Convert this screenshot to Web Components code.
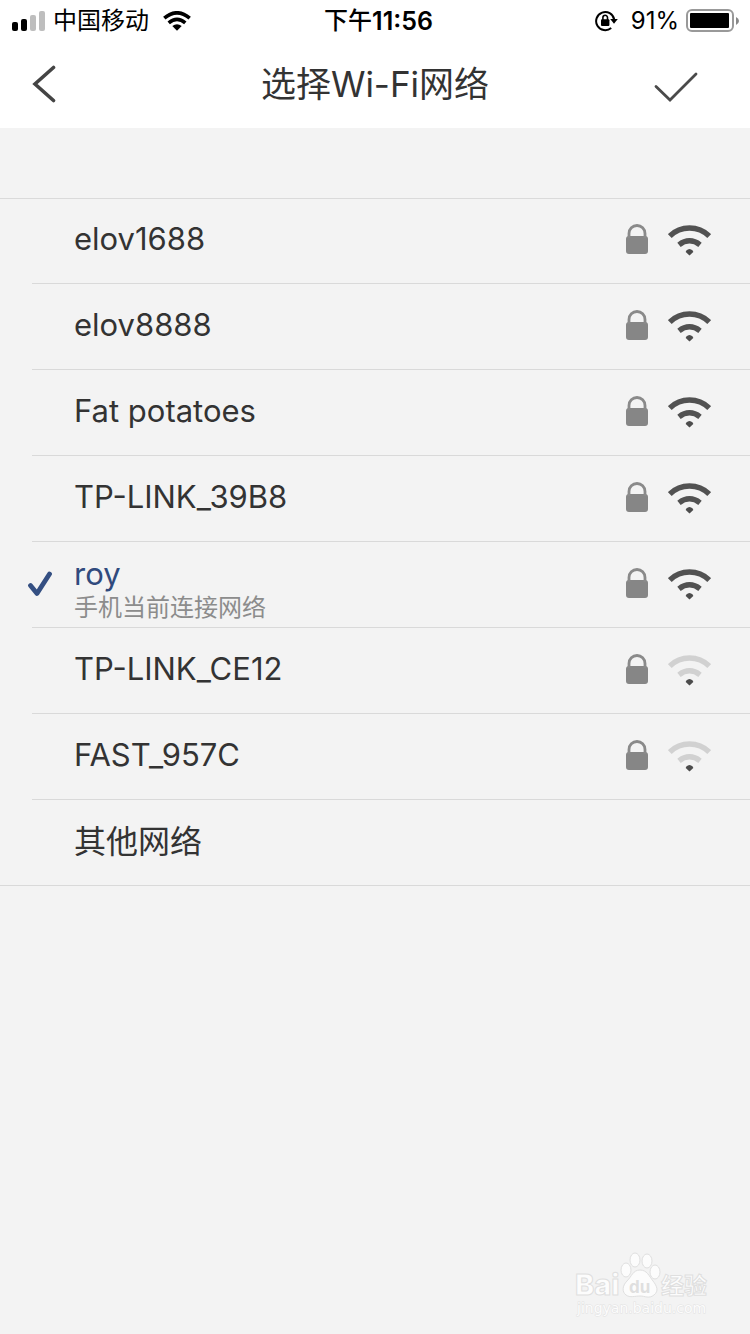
<!DOCTYPE html>
<html lang="zh-CN">
<head>
<meta charset="utf-8">
<meta name="viewport" content="width=device-width, initial-scale=1">
<title>选择Wi-Fi网络</title>
<style>
  body { margin: 0; background: #f3f3f3; color: #333; font-family: Inter, "Noto Sans CJK SC", sans-serif; }
</style>
</head>
<body>
<wifi-app></wifi-app>
<script>
const define = (name, html, setup) => customElements.define(name, class extends HTMLElement {
  connectedCallback() {
    if (this.shadowRoot) return;
    const t = document.createElement('template');
    t.innerHTML = '<style>*{box-sizing:border-box}svg{display:block;flex:none}</style>' + html;
    this.attachShadow({ mode: 'open' }).append(t.content.cloneNode(true));
    if (setup) setup(this, this.shadowRoot);
  }
});

define('status-bar', `
<style>
  :host { display: grid; grid-template-columns: 1fr auto 1fr; align-items: center; padding: 2px 11px 0 12px; color: #000; font-size: 24px; line-height: 38px; }
  div { display: flex; align-items: center; }
  .left { gap: 8px; }
  .carrier { margin-right: 6px; }
  .right { justify-content: flex-end; gap: 7px; }
  .time { font-weight: 600; font-size: 25px; padding-left: 6px; }
  .time span { font-weight: 500; font-size: 24px; }
  .pct { padding-left: 6px; }
</style>
<div class="left">
  <svg width="33" height="20" viewBox="0 0 33 20" aria-label="信号"><rect y="11" width="6" height="9" rx="2"/><rect x="9" y="8" width="6" height="12" rx="2"/><rect x="18" y="4" width="6" height="16" rx="2" fill="#bebebe"/><rect x="27" width="6" height="20" rx="2" fill="#bebebe"/></svg>
  <span class="carrier">中国移动</span>
  <svg width="28" height="20" viewBox="0 0 28 20" fill="none" stroke="#000" stroke-width="3.6"><path d="M1.300 7.200Q14-3.600 26.700 7.200"/><path d="M5.700 11.800Q14 4.800 22.300 11.800"/><path d="M9.300 15Q14 11.400 18.700 15L14 19.800Z" fill="#000" stroke="none"/></svg>
</div>
<div class="time"><span>下午</span>11:56</div>
<div class="right">
  <svg width="23" height="22" viewBox="0 0 23 22"><path d="M16.200 18A9.100 9.100 0 1 1 19.200 9.500" fill="none" stroke="#000" stroke-width="2"/><path d="M15.200 9h7.600L19 13.800Z"/><rect x="6" y="9.300" width="8.400" height="6.800" rx="1"/><path d="M7.900 10V7.600a2.300 2.300 0 0 1 4.600 0V10" fill="none" stroke="#000" stroke-width="1.600"/></svg>
  <span class="pct">91%</span>
  <svg width="53" height="24" viewBox="0 0 53 24"><rect x="1" y="1" width="46" height="21" rx="5" fill="none" stroke="#999" stroke-width="2"/><rect x="4" y="4" width="39" height="15" rx="1"/><path d="M50 8q3 1.500 3 4t-3 4Z" fill="#888"/></svg>
</div>`);

define('nav-bar', `
<style>
  :host { display: grid; grid-template-columns: 1fr auto 1fr; align-items: center; min-height: 88px; padding: 0 32px; }
  h1 { margin: 0; font-size: 35px; line-height: 48px; font-weight: 400; color: #333; }
  button { border: 0; padding: 0; background: none; color: #444; }
  .ok { justify-self: end; padding: 6px 20px 0 0; }
</style>
<button aria-label="返回"><svg width="24" height="38" viewBox="0 0 24 38" fill="none" stroke="currentColor" stroke-width="3.600" stroke-linecap="round"><path d="M21.500 2.500 3 19l18.500 16.500"/></svg></button>
<h1><slot></slot></h1>
<button class="ok" aria-label="确定"><svg width="44" height="30" viewBox="0 0 44 30" fill="none" stroke="#4a4a4a" stroke-width="2.800" stroke-linecap="round"><path d="M2 14.500 16 28 42 2"/></svg></button>`);

define('lock-icon', `
<style>:host { display: block; }</style>
<svg width="22" height="32" viewBox="0 0 22 32"><rect y="12" width="22" height="18" rx="3" fill="#868686"/><path d="M3 14V9.500a8 8 0 0 1 16 0V14" fill="none" stroke="#8a8a8a" stroke-width="2.800"/></svg>`);

define('wifi-icon', `
<style>
  :host { display: block; --arc: #525252; }
  :host([weak]) { --arc: #d1d1d1; }
  .arc { fill: none; stroke: var(--arc); stroke-width: 5.400; }
</style>
<svg width="43" height="32" viewBox="0 0 43 32"><path class="arc" d="M1.800 12Q10 4 21.500 4T41.200 12"/><path class="arc" d="M11 20.800Q16 16.800 21.500 16.800T32 20.800"/><path d="M18.300 26.500q3.200-3 6.400 0l.6 1.500-3.800 3.500-3.800-3.500Z" fill="#4c4c4c"/></svg>`);

define('network-row', `
<style>
  :host { display: block; position: relative; }
  :host(:first-child) { border-top: 1px solid #dadada; }
  :host::after { content: ""; position: absolute; left: 32px; right: 0; bottom: 0; height: 1px; background: #d9d9d9; }
  :host(:last-child)::after { left: 0; }
  button { display: grid; grid-template-columns: 46px 1fr auto; align-items: center; width: 100%; min-height: 86px; padding: 0 39px 2px 28px; border: 0; background: none; color: inherit; font: inherit; text-align: left; }
  :host(:first-child) button { min-height: 85px; padding-bottom: 4px; }
  .text { padding-bottom: 2px; }
  .name { display: block; font-size: 31px; line-height: 40px; }
  .note { display: none; font-size: 24px; line-height: 28px; color: #8c8c8c; }
  .icons { display: flex; gap: 20px; }
  .tick { visibility: hidden; }
  :host([current]) .text { padding: 8px 0 0; }
  :host([current]) .name { color: #304a7d; }
  :host([current]) .note { display: block; }
  :host([current]) .tick { visibility: visible; }
  :host([open]) .icons { display: none; }
  :host([open]) .text { padding: 0; }
  :host([open]) .name { font-size: 32px; }
</style>
<button>
  <svg class="tick" width="24" height="26" viewBox="0 0 24 26" fill="none" stroke="#344f82" stroke-width="4.800" stroke-linecap="round" stroke-linejoin="round"><path d="M2.500 14.500 9 22.500 21.500 3"/></svg>
  <span class="text"><span class="name"><slot></slot></span><span class="note"><slot name="note"></slot></span></span>
  <span class="icons"><lock-icon></lock-icon><wifi-icon></wifi-icon></span>
</button>`, (host, root) => {
  if (host.hasAttribute('weak')) root.querySelector('wifi-icon').setAttribute('weak', '');
});

define('site-mark', `
<style>
  :host { display: block; }
  text { font-family: Inter, "Noto Sans CJK SC", sans-serif; font-weight: 700; }
  .o { fill: #fcfcfc; stroke: #dfdfdf; stroke-width: 1; }
  .bai { font-weight: 800; }
  .url { font: 400 14px "DejaVu Sans", sans-serif; fill: #fcfcfc; stroke: #e2e2e2; stroke-width: 1; paint-order: stroke; }
</style>
<svg width="150" height="70" viewBox="0 0 150 70">
  <text class="o bai" x="0" y="43" font-size="29">Bai</text>
  <g class="o"><ellipse cx="51" cy="18" rx="5" ry="7"/><ellipse cx="60" cy="8" rx="5" ry="7"/><ellipse cx="72" cy="9" rx="5" ry="7"/><ellipse cx="80" cy="20" rx="5" ry="7"/><path d="M65 18c7 0 9 6 13 11s6 10 1 14-9 1-14 1-10 2-14-1-4-9 1-14 6-11 13-11Z"/></g>
  <text x="54" y="41" font-size="17" fill="#dfdfdf">du</text>
  <text class="o" x="86" y="42" font-size="23">经验</text>
  <text class="url" x="2" y="61">jingyan.baidu.com</text>
</svg>`);

define('wifi-app', `
<style>
  :host { display: flex; flex-direction: column; min-height: 100vh; }
  header { background: #fff; margin-bottom: 70px; }
  site-mark { align-self: flex-end; margin: auto 25px 12px 0; }
</style>
<header><status-bar></status-bar><nav-bar>选择Wi-Fi网络</nav-bar></header>
<main>
  <network-row>elov1688</network-row>
  <network-row>elov8888</network-row>
  <network-row>Fat potatoes</network-row>
  <network-row>TP-LINK_39B8</network-row>
  <network-row current>roy<span slot="note">手机当前连接网络</span></network-row>
  <network-row weak>TP-LINK_CE12</network-row>
  <network-row weak>FAST_957C</network-row>
  <network-row open>其他网络</network-row>
</main>
<site-mark></site-mark>`);
</script>
</body>
</html>
